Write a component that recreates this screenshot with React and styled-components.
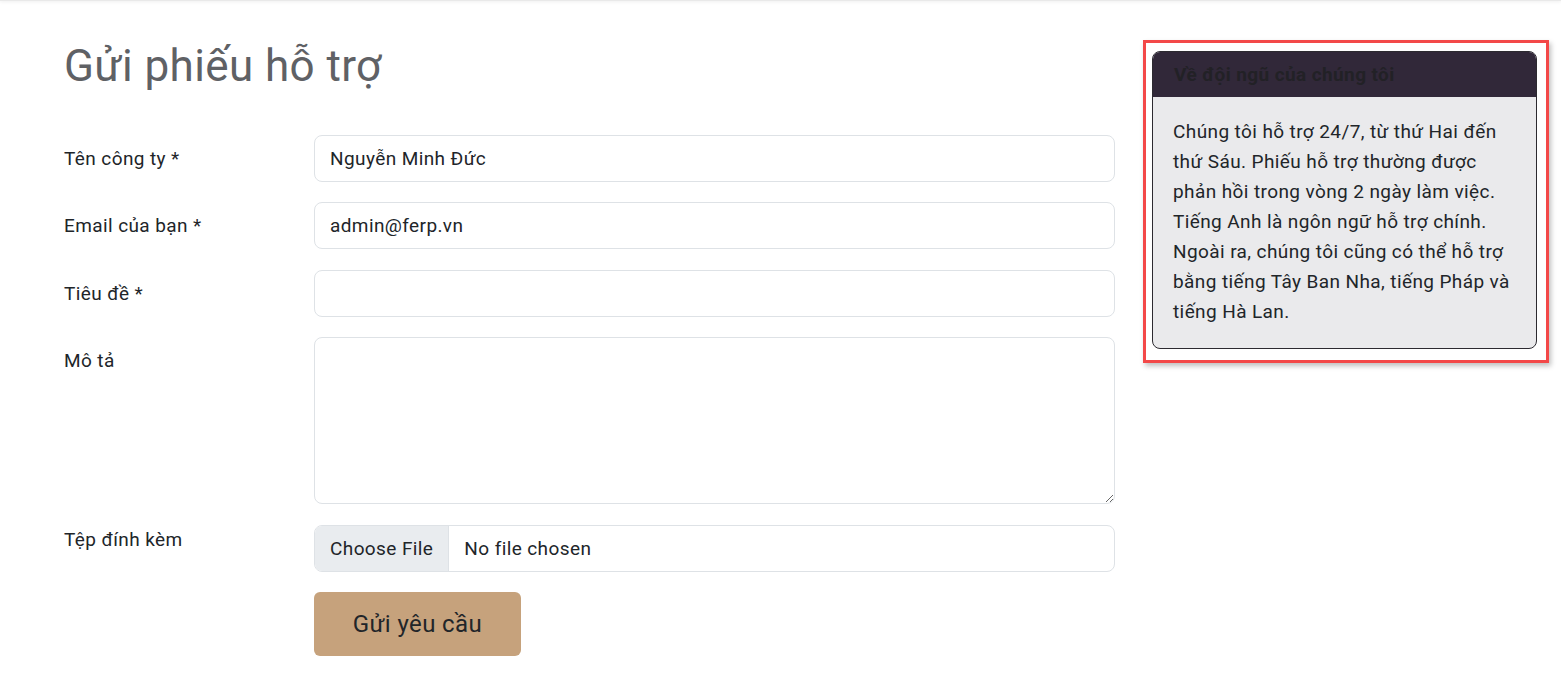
import styled, { createGlobalStyle } from "styled-components"

const GlobalStyle = createGlobalStyle`
  * { box-sizing: border-box; }
  body {
    margin: 0;
    background: #fff;
    font-family: Roboto, "Noto Sans", "Liberation Sans", sans-serif;
    color: #212529;
  }
`

const fields = [
  { label: "Tên công ty *", value: "Nguyễn Minh Đức" },
  { label: "Email của bạn *", value: "admin@ferp.vn" },
  { label: "Tiêu đề *", value: "" },
]

const App = () => {
  return (
    <>
      <GlobalStyle />
      <TopBar />
      <Page>
        <Main>
          <Title>Gửi phiếu hỗ trợ</Title>
          <Form onSubmit={e => e.preventDefault()}>
            {fields.map(f => (
              <Row key={f.label}>
                <Label>{f.label}</Label>
                <Input defaultValue={f.value} />
              </Row>
            ))}
            <Row>
              <Label>Mô tả</Label>
              <TextArea />
            </Row>
            <Row>
              <Label $top={1}>Tệp đính kèm</Label>
              <FileBox>
                <FileButton>Choose File</FileButton>
                <FileName>No file chosen</FileName>
              </FileBox>
            </Row>
            <Row>
              <span />
              <div>
                <SubmitBtn type="submit">Gửi yêu cầu</SubmitBtn>
              </div>
            </Row>
          </Form>
        </Main>

        <Aside>
          <Highlight>
            <Card>
              <CardHeader>Về đội ngũ của chúng tôi</CardHeader>
              <CardBody>
                Chúng tôi hỗ trợ 24/7, từ thứ Hai đến thứ Sáu. Phiếu hỗ trợ thường được
                phản hồi trong vòng 2 ngày làm việc. Tiếng Anh là ngôn ngữ hỗ trợ chính.
                Ngoài ra, chúng tôi cũng có thể hỗ trợ bằng tiếng Tây Ban Nha, tiếng Pháp
                và tiếng Hà Lan.
              </CardBody>
            </Card>
          </Highlight>
        </Aside>
      </Page>
    </>
  )
}

const TopBar = styled.div`
  height: 1px;
  background: #e9e9e9;
  box-shadow: 0 1px 3px rgba(0, 0, 0, 0.12);
`

const Page = styled.div`
  display: flex;
  align-items: flex-start;
  gap: 28px;
  padding: 39px 0 0 64px;
`

const Main = styled.div`
  width: 1051px;
`

const Title = styled.h1`
  margin: 0 0 42px;
  font-size: 44px;
  font-weight: 400;
  line-height: 1.2;
  letter-spacing: 0.4px;
  color: #5f6165;
`

const Form = styled.form`
  display: flex;
  flex-direction: column;
  gap: 20.5px;
`

const Row = styled.div`
  display: grid;
  grid-template-columns: 250px 801px;
  align-items: start;
`

const Label = styled.label`
  font-size: 19px;
  line-height: 28px;
  letter-spacing: 0.4px;
  padding-top: ${p => (p.$top ?? 10)}px;
  color: #212529;
`

const fieldBase = `
  width: 100%;
  border: 1px solid #dee2e6;
  border-radius: 8px;
  background: #fff;
  font-family: Roboto, "Noto Sans", sans-serif;
  font-size: 19px;
  letter-spacing: 0.4px;
  color: #212529;
  outline: none;
`

const Input = styled.input`
  ${fieldBase}
  height: 47px;
  padding: 0 15px;
`

const TextArea = styled.textarea`
  ${fieldBase}
  display: block;
  height: 167px;
  padding: 10px 15px;
  resize: vertical;
`

const FileBox = styled.div`
  ${fieldBase}
  height: 47px;
  display: flex;
  align-items: stretch;
  overflow: hidden;
`

const FileButton = styled.span`
  display: flex;
  align-items: center;
  padding: 0 15px;
  background: #e9ecef;
  border-right: 1px solid #dee2e6;
`

const FileName = styled.span`
  display: flex;
  align-items: center;
  padding: 0 15px;
`

const SubmitBtn = styled.button`
  width: 207px;
  height: 64px;
  border: none;
  border-radius: 6px;
  background: #c6a27c;
  color: #212529;
  font-family: Roboto, "Noto Sans", sans-serif;
  font-size: 24px;
  letter-spacing: 0.4px;
  cursor: pointer;
`

const Aside = styled.aside`
  width: 406px;
`

const Highlight = styled.div`
  border: 3px solid #f34848;
  padding: 8px 9px 11px 6px;
  box-shadow: 2px 3px 5px rgba(0, 0, 0, 0.25);
`

const Card = styled.div`
  border: 1px solid #2c2a30;
  border-radius: 8px;
  overflow: hidden;
  background: #eaeaec;
`

const CardHeader = styled.div`
  height: 45px;
  padding: 0 21px;
  display: flex;
  align-items: center;
  background: #312839;
  color: #222126;
  font-size: 19px;
  font-weight: 700;
  letter-spacing: 0.4px;
`

const CardBody = styled.div`
  padding: 20px 20px 21px;
  font-size: 19px;
  line-height: 30px;
  letter-spacing: 0.4px;
  color: #212529;
`

export default App
